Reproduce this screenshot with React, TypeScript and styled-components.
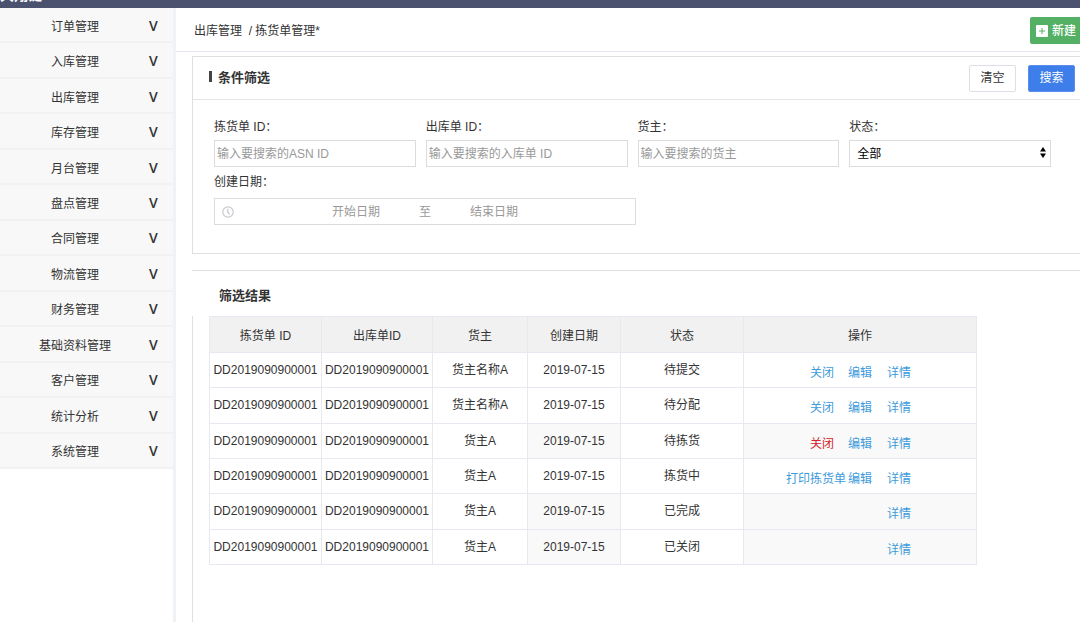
import React from "react";
import styled, { createGlobalStyle } from "styled-components";

const GlobalStyle = createGlobalStyle`
  * { box-sizing: border-box; }
  body {
    margin: 0;
    background: #fff;
    color: #333;
    font: 12px/16px "Liberation Sans", "Noto Sans CJK SC", sans-serif;
    overflow-x: hidden;
  }
  button, input, select { font: inherit; color: inherit; margin: 0; }
  a { text-decoration: none; }
`;

const Page = styled.div`
  display: flex;
  flex-direction: column;
  min-height: 100vh;
`;

const Header = styled.header`
  display: flex;
  align-items: flex-end;
  height: 8px;
  overflow: hidden;
  background: #4a5270;
`;

const Brand = styled.strong`
  flex: none;
  padding-bottom: 3px;
  color: #fff;
  font-size: 14px;
  line-height: 20px;
`;

const Body = styled.div`
  display: flex;
  flex: 1;
`;

const Sidebar = styled.nav`
  flex: none;
  width: 176px;
  border-right: 3px solid #eff2f6;
`;

const Menu = styled.ul`
  display: grid;
  grid-auto-rows: 1fr;
  min-height: 461px;
  margin: 0;
  padding: 0;
  list-style: none;
`;

const MenuItem = styled.li`
  display: flex;
  border-bottom: 2px solid #f2f2f3;
  background: #f8f8f8;
`;

const MenuButton = styled.button`
  display: flex;
  align-items: center;
  width: 100%;
  padding: 4px 0 0;
  border: 0;
  background: none;
  cursor: pointer;
`;

const MenuLabel = styled.span`
  width: 149px;
  padding-left: 1px;
  text-align: center;
`;

const MenuArrow = styled.span`
  padding-bottom: 2px;
  font-family: "Open Sans", sans-serif;
  font-size: 14px;
  font-weight: 600;
`;

const Main = styled.main`
  display: flex;
  flex: 1;
  flex-direction: column;
  min-width: 0;
`;

const TopBar = styled.div`
  display: flex;
  align-items: center;
  justify-content: space-between;
  height: 44px;
  padding-left: 18px;
  border-bottom: 1px solid #e6e8ef;
`;

const Crumbs = styled.div`
  padding-top: 2px;
  white-space: pre;
`;

const CreateButton = styled.button`
  display: flex;
  align-items: center;
  gap: 4px;
  height: 27px;
  margin-top: 2px;
  padding: 0 4px 0 6px;
  border: 0;
  border-radius: 2px 0 0 2px;
  background: #54b065;
  color: #fff;
  font-weight: 500;
  cursor: pointer;
`;

const Content = styled.div`
  display: flex;
  flex: 1;
  flex-direction: column;
  gap: 16px;
  padding: 4px 0 0 16px;
`;

const FilterPanel = styled.section`
  border: 1px solid #dedfe0;
  border-right: 0;
`;

const PanelHead = styled.div`
  display: flex;
  align-items: center;
  gap: 12px;
  height: 43px;
  padding: 0 5px 0 16px;
  border-bottom: 1px solid #e4e5e6;
`;

const PanelTitle = styled.h2`
  display: flex;
  align-items: center;
  gap: 6px;
  flex: 1;
  margin: 0;
  font-size: 13px;
  line-height: 16px;

  &::before {
    content: "";
    width: 3px;
    height: 11px;
    margin-bottom: 4px;
    background: #444;
  }
`;

const ActionButton = styled.button<{ $primary?: boolean }>`
  width: 47px;
  height: 27px;
  padding: 0;
  border: 1px solid ${(p) => (p.$primary ? "#5b8fea" : "#dcdfe6")};
  border-radius: 2px;
  background: ${(p) => (p.$primary ? "#3d7eea" : "#fff")};
  color: ${(p) => (p.$primary ? "#fff" : "#333")};
  cursor: pointer;
`;

const FilterForm = styled.form`
  display: grid;
  grid-template-columns: repeat(4, 1fr);
  gap: 7px 10px;
  padding: 19px 29px 28px 21px;
`;

const Field = styled.div<{ $wide?: boolean }>`
  display: flex;
  flex-direction: column;
  gap: ${(p) => (p.$wide ? 8 : 5)}px;
  min-width: 0;
  grid-column: ${(p) => (p.$wide ? "span 2" : "auto")};
  margin-right: ${(p) => (p.$wide ? -8 : 0)}px;
`;

const TextInput = styled.input`
  width: 100%;
  height: 27px;
  padding: 0 2px;
  border: 1px solid #dcdcdc;
  border-radius: 0;
  outline: 0;

  &::placeholder { color: #999; opacity: 1; }
`;

const SelectBox = styled.div`
  position: relative;

  svg {
    position: absolute;
    top: 7px;
    right: 5px;
    pointer-events: none;
  }
`;

const Select = styled.select`
  width: 100%;
  height: 27px;
  padding: 0 7px;
  border: 1px solid #dcdcdc;
  border-radius: 0;
  background: #fff;
  color: #000;
  appearance: none;
`;

const DateRange = styled.div`
  display: flex;
  align-items: center;
  height: 27px;
  padding: 0 8px 0 7px;
  border: 1px solid #dcdcdc;
  color: #999;

  svg { flex: none; }
`;

const DateInput = styled.input<{ $start?: boolean }>`
  flex: ${(p) => (p.$start ? "none" : "1")};
  width: 146px;
  min-width: 0;
  padding: 0;
  border: 0;
  outline: 0;
  background: none;
  text-align: ${(p) => (p.$start ? "right" : "left")};

  &::placeholder { color: #999; opacity: 1; }
`;

const RangeWord = styled.span`
  flex: none;
  width: 90px;
  text-align: center;
`;

const Results = styled.section`
  display: flex;
  flex: 1;
  flex-direction: column;
  border-top: 1px solid #dedfe0;
`;

const ResultsTitle = styled.h2`
  margin: 0;
  padding: 17px 27px 12px;
  font-size: 13px;
  line-height: 16px;
`;

const ResultsBody = styled.div`
  flex: 1;
  padding: 0 16px;
  border-left: 1px solid #dedfe0;
`;

const Table = styled.table`
  width: 768px;
  height: 249px;
  border-collapse: collapse;
  table-layout: fixed;
  text-align: center;
`;

const HeadCell = styled.th<{ $width: number }>`
  width: ${(p) => p.$width}px;
  height: 36px;
  padding: 2px 0 0;
  border: 1px solid #e6e9f0;
  background: #f1f1f1;
  font-weight: 400;
`;

const Cell = styled.td<{ $shaded?: boolean }>`
  padding: 0;
  border: 1px solid #e6e9f0;
  background: ${(p) => (p.$shaded ? "#f9f9f9" : "#fff")};
  white-space: nowrap;
`;

const Actions = styled.div`
  display: grid;
  grid-template-columns: 102px 37px 24px;
  column-gap: 2px;
  padding-top: 6px;
`;

const ActionLink = styled.a<{ $slot: number; $danger?: boolean; $inset?: boolean }>`
  grid-column: ${(p) => p.$slot};
  padding-right: ${(p) => (p.$inset ? 12 : 0)}px;
  color: ${(p) => (p.$danger ? "#d3232b" : "#409bdb")};
  text-align: ${(p) => (p.$slot === 1 ? "right" : "left")};
`;

const menu = [
  "订单管理", "入库管理", "出库管理", "库存管理", "月台管理", "盘点管理", "合同管理",
  "物流管理", "财务管理", "基础资料管理", "客户管理", "统计分析", "系统管理",
];

const columns = [
  { name: "拣货单 ID", width: 112 },
  { name: "出库单ID", width: 111 },
  { name: "货主", width: 95 },
  { name: "创建日期", width: 93 },
  { name: "状态", width: 123 },
  { name: "操作", width: 233 },
];

type Row = {
  owner: string;
  status: string;
  first?: "关闭" | "打印拣货单";
  danger?: boolean;
  editable?: boolean;
  shaded?: boolean;
};

const rows: Row[] = [
  { owner: "货主名称A", status: "待提交", first: "关闭", editable: true },
  { owner: "货主名称A", status: "待分配", first: "关闭", editable: true },
  { owner: "货主A", status: "待拣货", first: "关闭", danger: true, editable: true, shaded: true },
  { owner: "货主A", status: "拣货中", first: "打印拣货单", editable: true },
  { owner: "货主A", status: "已完成", shaded: true },
  { owner: "货主A", status: "已关闭", shaded: true },
];

const orderId = "DD2019090900001";

const PlusIcon = () => (
  <svg width="12" height="12" viewBox="0 0 12 12" aria-hidden="true">
    <rect width="12" height="12" rx="1" fill="#fff" />
    <path d="M6 3v6M3 6h6" stroke="#54b065" strokeWidth="1" />
  </svg>
);

const ClockIcon = () => (
  <svg width="12" height="12" viewBox="0 0 12 12" fill="none" stroke="#c6c9d0" aria-hidden="true">
    <circle cx="6" cy="6" r="5.2" strokeWidth="1.2" />
    <path d="M5.8 2.8v3.4l1.8 2.2" strokeWidth="1.2" />
  </svg>
);

const SortArrows = () => (
  <svg width="6" height="11" viewBox="0 0 6 11" fill="#000" aria-hidden="true">
    <path d="M3 0l3 4.5H0zM3 11l3-4.5H0z" />
  </svg>
);

export default function App() {
  return (
    <Page>
      <GlobalStyle />
      <Header>
        <Brand>大翔链</Brand>
      </Header>
      <Body>
        <Sidebar>
          <Menu>
            {menu.map((name) => (
              <MenuItem key={name}>
                <MenuButton type="button">
                  <MenuLabel>{name}</MenuLabel>
                  <MenuArrow>V</MenuArrow>
                </MenuButton>
              </MenuItem>
            ))}
          </Menu>
        </Sidebar>
        <Main>
          <TopBar>
            <Crumbs>{"出库管理  / 拣货单管理*"}</Crumbs>
            <CreateButton type="button">
              <PlusIcon />
              新建
            </CreateButton>
          </TopBar>
          <Content>
            <FilterPanel>
              <PanelHead>
                <PanelTitle>条件筛选</PanelTitle>
                <ActionButton type="reset" form="filters">清空</ActionButton>
                <ActionButton type="submit" form="filters" $primary>搜索</ActionButton>
              </PanelHead>
              <FilterForm id="filters" onSubmit={(e) => e.preventDefault()}>
                <Field>
                  <label htmlFor="pick">拣货单 ID：</label>
                  <TextInput id="pick" placeholder="输入要搜索的ASN ID" />
                </Field>
                <Field>
                  <label htmlFor="outbound">出库单 ID：</label>
                  <TextInput id="outbound" placeholder="输入要搜索的入库单 ID" />
                </Field>
                <Field>
                  <label htmlFor="owner">货主：</label>
                  <TextInput id="owner" placeholder="输入要搜索的货主" />
                </Field>
                <Field>
                  <label htmlFor="status">状态：</label>
                  <SelectBox>
                    <Select id="status">
                      <option>全部</option>
                    </Select>
                    <SortArrows />
                  </SelectBox>
                </Field>
                <Field $wide>
                  <label htmlFor="start">创建日期：</label>
                  <DateRange>
                    <ClockIcon />
                    <DateInput id="start" placeholder="开始日期" $start />
                    <RangeWord>至</RangeWord>
                    <DateInput aria-label="结束日期" placeholder="结束日期" />
                  </DateRange>
                </Field>
              </FilterForm>
            </FilterPanel>
            <Results>
              <ResultsTitle>筛选结果</ResultsTitle>
              <ResultsBody>
                <Table>
                  <thead>
                    <tr>
                      {columns.map((c) => (
                        <HeadCell key={c.name} $width={c.width} scope="col">{c.name}</HeadCell>
                      ))}
                    </tr>
                  </thead>
                  <tbody>
                    {rows.map((r) => (
                      <tr key={r.status}>
                        <Cell>{orderId}</Cell>
                        <Cell>{orderId}</Cell>
                        <Cell>{r.owner}</Cell>
                        <Cell $shaded={r.shaded}>2019-07-15</Cell>
                        <Cell>{r.status}</Cell>
                        <Cell $shaded={r.shaded}>
                          <Actions>
                            {r.first && (
                              <ActionLink href="#" $slot={1} $danger={r.danger} $inset={r.first === "关闭"}>
                                {r.first}
                              </ActionLink>
                            )}
                            {r.editable && <ActionLink href="#" $slot={2}>编辑</ActionLink>}
                            <ActionLink href="#" $slot={3}>详情</ActionLink>
                          </Actions>
                        </Cell>
                      </tr>
                    ))}
                  </tbody>
                </Table>
              </ResultsBody>
            </Results>
          </Content>
        </Main>
      </Body>
    </Page>
  );
}
